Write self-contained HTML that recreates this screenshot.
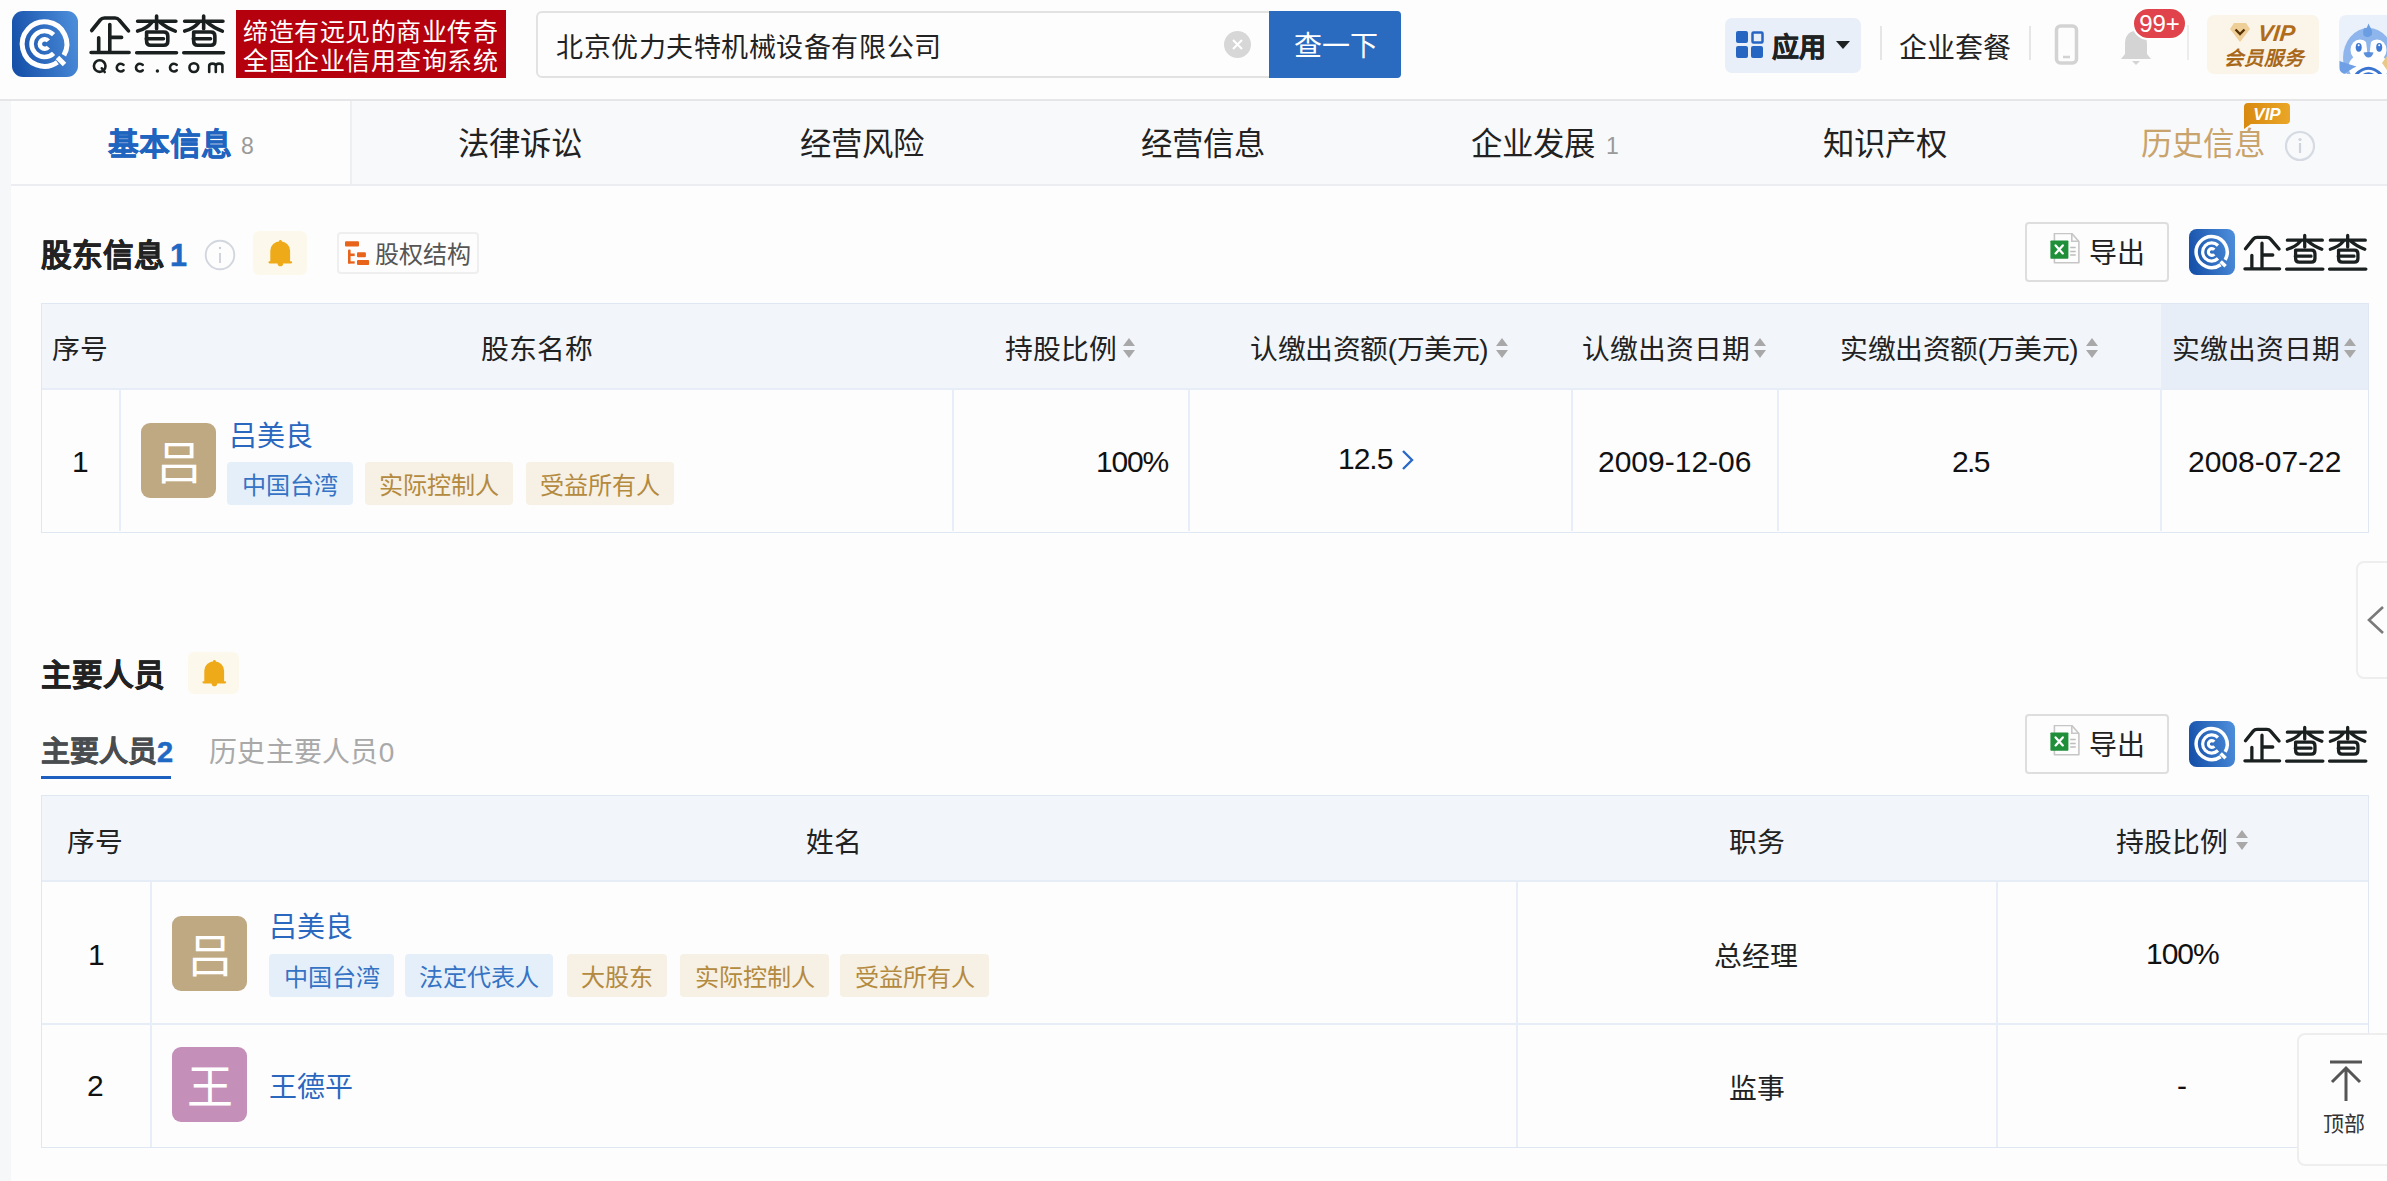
<!DOCTYPE html>
<html lang="zh-CN">
<head>
<meta charset="utf-8">
<style>
*{margin:0;padding:0;box-sizing:border-box}
html,body{width:2387px;height:1181px;overflow:hidden;background:#fdfdfd}
body{position:relative;font-family:"Liberation Sans",sans-serif;color:#222}
.a{position:absolute;white-space:nowrap}
.hdr{position:absolute;left:0;top:0;width:2387px;height:101px;background:#fdfdfd;border-bottom:2px solid #e6e6e8}
.strip{position:absolute;left:0;top:101px;width:11px;height:1080px;background:#f6f7f9}
.tabs{position:absolute;left:11px;top:101px;width:2376px;height:85px;background:#f8f9fb;border-bottom:2px solid #ecedf0}
.tab1{position:absolute;left:11px;top:101px;width:341px;height:83px;background:#fdfdfd;border-right:2px solid #eeeff2}
.tt{font-size:31.4px;line-height:40px;top:125px;color:#222}
.cnt{font-size:23px;line-height:30px;color:#9a9a9a}
.sec{font-size:30.6px;line-height:40px;font-weight:bold;color:#222;-webkit-text-stroke:0.5px currentColor}
.tbl{position:absolute;border:1px solid #dfe7f3;background:#fdfdfe}
.th{position:absolute;background:#f2f6fb}
.vl{position:absolute;width:2px;background:#e8eef7}
.hl{position:absolute;height:2px;background:#e6edf6}
.cell{font-size:27.8px;line-height:36px;color:#222}
.num{font-size:30px;line-height:36px;color:#111}
.tag{position:absolute;height:43px;border-radius:4px;font-size:24.1px;line-height:47px;text-align:center}
.tb{background:#e5effa;color:#3573c4}
.tg{background:#f6f0e5;color:#b48a3e}
.av{position:absolute;width:75px;height:75px;border-radius:9px;color:#fff;font-size:46px;line-height:81px;text-align:center}
.name{font-size:28px;line-height:36px;color:#2a68c0}
.sort{position:absolute;width:12px;height:20px}
</style>
</head>
<body>
<svg width="0" height="0" style="position:absolute">
<defs>
<linearGradient id="lg" x1="0" y1="0.6" x2="1" y2="0.4">
<stop offset="0" stop-color="#1550a9"/><stop offset="1" stop-color="#4b8cd9"/>
</linearGradient>
<symbol id="qicon" viewBox="0 0 66 66">
<rect width="66" height="66" rx="11" fill="url(#lg)"/>
<g fill="none" stroke="#fff">
<path d="M45.4 51.3 A22.3 22.3 0 1 1 51.9 44.15" stroke-width="5"/>
<path d="M45.5 46.5 L52.5 53.5" stroke-width="5"/>
<path d="M41.6 23.65 A13 13 0 1 0 41.6 42.35" stroke-width="4.6"/>
<path d="M36.28 29.9 A4.8 4.8 0 1 0 36.28 36.1" stroke-width="4.5"/>
</g>
</symbol>
<symbol id="qtext" viewBox="0 0 144 46">
<g fill="none" stroke="#1a1f1f" stroke-width="3.6" stroke-linecap="round" stroke-linejoin="round">
<path d="M5.7 20.5 L14.2 10 Q15.8 8 18.5 8 L29 8 Q31.6 8 33.2 10 L42.5 20.8"/>
<path d="M23.8 14.5 V41.6 M25.3 27.4 H35.6 M12.7 27.7 V41.6 M5.1 42.5 H43.1"/>
<g id="cha">
<path d="M51.6 11.2 H89.9 M70.6 6 V18.7 M65.8 12.4 Q61 18.5 51.6 21.1 M74.2 12.4 Q80 17.5 89.3 21.1 M60.3 28.7 H77.5 M50.7 42.8 H90.5"/>
<path d="M60.6 22 H77.8 Q81.8 22 81.8 26 V31.3 Q81.8 35.3 77.8 35.3 H64.6 Q60.6 35.3 60.6 31.3 Z"/>
</g>
<use href="#cha" x="47.06"/>
</g>
</symbol>
</defs>
</svg>

<!-- HEADER -->
<div class="hdr"></div>
<svg class="a" style="left:11.66px;top:11px" width="66" height="66"><use href="#qicon"/></svg>
<svg class="a" style="left:86px;top:10px" width="144" height="46" viewBox="0 0 144 46"><use href="#qtext"/></svg>
<svg class="a" style="left:86px;top:56px" width="144" height="22" viewBox="0 46 144 22">
<g fill="none" stroke="#1a1f1f" stroke-width="2.6" stroke-linecap="round">
<circle cx="13.7" cy="56.1" r="5.8"/><path d="M15.8 58.3 L18.7 62"/>
<path d="M37.5 54.9 A3.9 3.9 0 1 0 37.5 60.3"/>
<path d="M56.7 54.9 A3.9 3.9 0 1 0 56.7 60.3"/>
<path d="M90.7 54.9 A3.9 3.9 0 1 0 90.7 60.3"/>
<circle cx="107.85" cy="57.6" r="4.4"/>
<path d="M123.2 62 V56 Q123.2 53.6 126.5 53.6 Q129.8 53.6 129.8 56 V62 M129.8 56 Q129.8 53.6 133.1 53.6 Q136.4 53.6 136.4 56 V62"/>
</g>
<circle cx="71.4" cy="61" r="1.7" fill="#1a1f1f"/>
</svg>
<div class="a" style="left:236px;top:10px;width:270px;height:68px;background:#b5000e"></div>
<div class="a" style="left:243px;top:18px;font-size:25px;line-height:29px;letter-spacing:0.55px;color:#fff">缔造有远见的商业传奇<br>全国企业信用查询系统</div>

<!-- search -->
<div class="a" style="left:536px;top:11px;width:740px;height:67px;border:2px solid #e2e2e2;border-radius:6px;background:#fdfdfd"></div>
<div class="a" style="left:556px;top:30px;font-size:27px;letter-spacing:0.55px;line-height:36px;color:#222">北京优力夫特机械设备有限公司</div>
<div class="a" style="left:1224px;top:31px;width:27px;height:27px;border-radius:50%;background:#d7d7d7"></div>
<svg class="a" style="left:1224px;top:31px" width="27" height="27"><path d="M9 9 L18 18 M18 9 L9 18" stroke="#fff" stroke-width="2"/></svg>
<div class="a" style="left:1269px;top:11px;width:132px;height:67px;background:#2a6bbf;border-radius:0 4px 4px 0"></div>
<div class="a" style="left:1294px;top:29px;font-size:28px;line-height:36px;color:#fff">查一下</div>

<!-- apps -->
<div class="a" style="left:1725px;top:18px;width:136px;height:55px;background:#e8eff9;border-radius:7px"></div>
<svg class="a" style="left:1736px;top:31px" width="28" height="28">
<rect x="0" y="0" width="12" height="12" rx="2" fill="#2666c2"/>
<rect x="16.5" y="1.5" width="10" height="10" rx="1" fill="none" stroke="#2666c2" stroke-width="2.5"/>
<rect x="0" y="15" width="12" height="12" rx="2" fill="#2666c2"/>
<rect x="15" y="15" width="12" height="12" rx="2" fill="#2666c2"/>
</svg>
<div class="a" style="left:1772px;top:30px;font-size:27px;line-height:36px;font-weight:bold;color:#1e2222;-webkit-text-stroke:0.5px currentColor">应用</div>
<svg class="a" style="left:1836px;top:41px" width="15" height="9"><path d="M0 0 H14 L7 8 Z" fill="#1e2222"/></svg>
<div class="a" style="left:1880px;top:26px;width:2px;height:34px;background:#e6e6e6"></div>
<div class="a" style="left:1899px;top:31px;font-size:28px;line-height:36px;color:#222">企业套餐</div>
<div class="a" style="left:2029px;top:26px;width:2px;height:34px;background:#e6e6e6"></div>
<svg class="a" style="left:2054px;top:24px" width="26" height="42">
<rect x="2.5" y="2" width="20" height="37" rx="4" fill="none" stroke="#d3d3d3" stroke-width="3.5"/>
<path d="M9 33 H16" stroke="#d3d3d3" stroke-width="2.5"/>
</svg>
<svg class="a" style="left:2118px;top:28px" width="36" height="38">
<path d="M18 3 C10 3 7 9 7 16 V26 L3 31 H33 L29 26 V16 C29 9 26 3 18 3 Z" fill="#d4d4d4"/>
<path d="M14 33 H22 L18 37 Z" fill="#d4d4d4"/>
</svg>
<div class="a" style="left:2132px;top:7px;width:55px;height:33px;border-radius:17px;background:#e0434c;border:2px solid #fff;color:#fff;font-size:24px;line-height:29px;text-align:center">99+</div>
<div class="a" style="left:2187px;top:25px;width:2px;height:35px;background:#ececec"></div>
<div class="a" style="left:2207px;top:15px;width:112px;height:59px;background:#fbf4e8;border-radius:7px"></div>
<svg class="a" style="left:2229px;top:22px" width="22" height="21">
<path d="M5 1 H17 L21 7 L11 20 L1 7 Z" fill="#efcf98"/>
<path d="M6.5 7.5 L11 12 L15.5 7.5" fill="none" stroke="#5a3408" stroke-width="2.4"/>
</svg>
<div class="a" style="left:2258px;top:20px;font-size:23px;line-height:26px;font-weight:bold;font-style:italic;color:#b06c18;transform:skewX(-6deg)">VIP</div>
<div class="a" style="left:2224px;top:45px;font-size:19.5px;line-height:26px;font-weight:bold;font-style:italic;color:#a8681a">会员服务</div>
<div class="a" style="left:2339px;top:15px;width:60px;height:59px;background:#eaf1fb;border-radius:7px;overflow:hidden">
<svg width="60" height="59">
<ellipse cx="29.5" cy="43" rx="25.5" ry="30" fill="#8fb6ec"/>
<ellipse cx="21" cy="35" rx="9.5" ry="10.5" fill="#fff"/>
<ellipse cx="38" cy="35" rx="9.5" ry="10.5" fill="#fff"/>
<ellipse cx="29.5" cy="52" rx="20" ry="15" fill="#fff"/>
<path d="M26.5 22 L32.5 22 L30.5 39 L28.5 39 Z" fill="#8fb6ec"/>
<path d="M24.5 20 C23.5 16 24.5 14 26 12.5 C27 14.5 28 13 29.5 8.6 C31 12.5 34 15 33 19 C32.5 22.5 25.5 23 24.5 20 Z" fill="#6b9de3"/>
<path d="M0.5 46 Q9 49 17.5 51.5 Q10 55 6 59 H0.5 Z" fill="#6f9fe4"/>
<ellipse cx="19.7" cy="32.3" rx="3" ry="4.4" fill="#3f7ad4"/>
<ellipse cx="40.2" cy="32.3" rx="3" ry="4.4" fill="#3f7ad4"/>
<circle cx="19.7" cy="30.3" r="1" fill="#fff"/><circle cx="40.2" cy="30.3" r="1" fill="#fff"/>
<path d="M24.5 37.5 Q29.5 36.5 34.5 37.5 Q33 42.5 29.5 42.5 Q26 42.5 24.5 37.5 Z" fill="#5a8edc"/>
<path d="M17 59.5 Q29.5 47 42 59.5" fill="none" stroke="#3a74d0" stroke-width="3"/>
<path d="M23 59.5 Q29.5 55 36 59.5 Z" fill="#3a74d0"/>
<path d="M48 41 L54 48 L48 55 L43 48 Z" fill="#e8c98a"/>
</svg>
</div>

<!-- TABS -->
<div class="strip"></div>
<div class="tabs"></div>
<div class="tab1"></div>
<div class="a tt" style="left:108px;color:#1f65c0;font-weight:bold;font-size:30.8px;-webkit-text-stroke:0.5px currentColor">基本信息</div>
<div class="a cnt" style="left:241px;top:131px">8</div>
<div class="a tt" style="left:458px">法律诉讼</div>
<div class="a tt" style="left:800px">经营风险</div>
<div class="a tt" style="left:1141px">经营信息</div>
<div class="a tt" style="left:1471px">企业发展</div>
<div class="a cnt" style="left:1606px;top:131px">1</div>
<div class="a tt" style="left:1823px">知识产权</div>
<div class="a tt" style="left:2141px;color:#c9a36c">历史信息</div>
<svg class="a" style="left:2284px;top:130px" width="32" height="32"><circle cx="16" cy="16" r="14" fill="none" stroke="#d6dae2" stroke-width="2.2"/><circle cx="16" cy="9.5" r="1.6" fill="#cfd4dc"/><path d="M16 13 V23" stroke="#cfd4dc" stroke-width="2.2"/></svg>
<svg class="a" style="left:2243px;top:103px" width="48" height="27">
<defs><linearGradient id="vg" x1="0" y1="0" x2="1" y2="0"><stop offset="0" stop-color="#d88a10"/><stop offset="1" stop-color="#eaa628"/></linearGradient></defs>
<path d="M5 0 H43 Q47 0 47 4 V17 Q47 21 43 21 H8 L1 26 V4 Q1 0 5 0 Z" fill="url(#vg)"/>
<text x="24" y="17" font-family="Liberation Sans" font-weight="bold" font-style="italic" font-size="17" fill="#fff" text-anchor="middle">VIP</text>
</svg>


<!-- SECTION 1 -->
<div class="a sec" style="left:41px;top:235px">股东信息</div>
<div class="a sec" style="left:170px;top:235px;color:#1f68c4">1</div>
<svg class="a" style="left:204px;top:239px" width="32" height="32"><circle cx="16" cy="16" r="14.3" fill="none" stroke="#d2d6de" stroke-width="1.9"/><circle cx="16" cy="9" r="1.2" fill="#c9cdd6"/><path d="M16 14 V24" stroke="#c9cdd6" stroke-width="1.7"/></svg>
<div class="a" style="left:253px;top:231px;width:54px;height:44px;border-radius:6px;background:#fcf9ec"></div>
<svg class="a" style="left:266px;top:239px" width="28" height="28" viewBox="0 0 28 28"><g fill="#eeaa18"><circle cx="14.4" cy="2.3" r="1.4"/><path d="M4.3 22.2 V11.8 A9.9 9.6 0 0 1 24.1 11.8 V22.2 H25 Q26.2 22.2 26.2 23.35 Q26.2 24.5 25 24.5 H3.6 Q2.4 24.5 2.4 23.35 Q2.4 22.2 3.6 22.2 Z M11.6 24.4 A2.8 2.8 0 0 0 17.2 24.4 Z"/></g></svg>
<div class="a" style="left:337px;top:232px;width:142px;height:42px;border:2px solid #efefef;border-radius:4px;background:#fdfdfd"></div>
<svg class="a" style="left:345px;top:241px" width="26" height="25" fill="#e8641a"><rect x="0" y="0.3" width="14" height="5.3" rx="1"/><rect x="3" y="8.5" width="2.6" height="14.1" rx="1"/><rect x="3" y="20.3" width="6.7" height="2.3"/><rect x="3" y="12.5" width="6.7" height="2.6"/><rect x="12" y="11.3" width="8.9" height="4.9" rx="1"/><rect x="12" y="19" width="12.1" height="4.9" rx="1"/></svg>
<div class="a" style="left:375px;top:239px;font-size:24px;line-height:32px;color:#555">股权结构</div>

<div class="a" style="left:2025px;top:222px;width:144px;height:60px;border:2px solid #dedede;border-radius:4px;background:#fdfdfd"></div>
<svg class="a" style="left:2050px;top:233px" width="32" height="32" viewBox="0 0 32 32"><path d="M4.4 0.5 H21.8 L28.9 8.5 V29.8 H4.4 Z" fill="#fdfdfd" stroke="#c6c6c6" stroke-width="1.6" stroke-linejoin="round"/><path d="M21.8 0.5 V8.2 H28.9" fill="none" stroke="#c6c6c6" stroke-width="1.6"/><path d="M20.2 14.5 H25.7 M20.2 18.4 H25.7 M20.2 22.1 H25.7" stroke="#bdbdbd" stroke-width="1.5"/><rect x="0.4" y="7.5" width="18" height="18.3" rx="0.8" fill="#1f8f3a"/><path d="M5.6 12.4 L12.8 20.4 M12.8 12.4 L5.6 20.4" stroke="#fff" stroke-width="2.3" stroke-linecap="round"/></svg>
<div class="a" style="left:2089px;top:236px;font-size:28px;line-height:36px;color:#222">导出</div>
<svg class="a" style="left:2189px;top:229px" width="46" height="46"><use href="#qicon"/></svg>
<svg class="a" style="left:2239.5px;top:230px" width="132" height="42" viewBox="0 0 144 46"><use href="#qtext"/></svg>

<!-- TABLE 1 -->
<div class="tbl" style="left:41px;top:303px;width:2328px;height:230px"></div>
<div class="th" style="left:42px;top:304px;width:2326px;height:85px"></div>
<div class="th" style="left:2161px;top:304px;width:207px;height:85px;background:#e8eef7"></div>
<div class="hl" style="left:42px;top:388px;width:2326px"></div>
<div class="vl" style="left:119px;top:389px;height:142px"></div>
<div class="vl" style="left:952px;top:389px;height:142px"></div>
<div class="vl" style="left:1188px;top:389px;height:142px"></div>
<div class="vl" style="left:1571px;top:389px;height:142px"></div>
<div class="vl" style="left:1777px;top:389px;height:142px"></div>
<div class="vl" style="left:2160px;top:389px;height:142px"></div>

<div class="a cell" style="left:52px;top:332px">序号</div>
<div class="a cell" style="left:481px;top:332px">股东名称</div>
<div class="a cell" style="left:1005px;top:332px">持股比例</div>
<svg class="a sort" style="left:1123px;top:338px" viewBox="0 0 12 20"><path d="M6 0 L12 8 H0 Z M0 12 H12 L6 20 Z" fill="#a8a8a8"/></svg>
<div class="a cell" style="left:1250px;top:332px;letter-spacing:-0.45px">认缴出资额(万美元)</div>
<svg class="a sort" style="left:1496px;top:338px" viewBox="0 0 12 20"><path d="M6 0 L12 8 H0 Z M0 12 H12 L6 20 Z" fill="#a8a8a8"/></svg>
<div class="a cell" style="left:1582px;top:332px">认缴出资日期</div>
<svg class="a sort" style="left:1754px;top:338px" viewBox="0 0 12 20"><path d="M6 0 L12 8 H0 Z M0 12 H12 L6 20 Z" fill="#a8a8a8"/></svg>
<div class="a cell" style="left:1840px;top:332px;letter-spacing:-0.45px">实缴出资额(万美元)</div>
<svg class="a sort" style="left:2086px;top:338px" viewBox="0 0 12 20"><path d="M6 0 L12 8 H0 Z M0 12 H12 L6 20 Z" fill="#a8a8a8"/></svg>
<div class="a cell" style="left:2172px;top:332px">实缴出资日期</div>
<svg class="a sort" style="left:2344px;top:338px" viewBox="0 0 12 20"><path d="M6 0 L12 8 H0 Z M0 12 H12 L6 20 Z" fill="#a8a8a8"/></svg>

<div class="a num" style="left:72px;top:444px">1</div>
<div class="av" style="left:141px;top:423px;background:#bfa983">吕</div>
<div class="a name" style="left:229px;top:419px">吕美良</div>
<div class="tag tb" style="left:227px;top:462px;width:126px">中国台湾</div>
<div class="tag tg" style="left:365px;top:462px;width:148px">实际控制人</div>
<div class="tag tg" style="left:526px;top:462px;width:148px">受益所有人</div>
<div class="a num" style="left:1096px;top:444px;letter-spacing:-1.2px">100%</div>
<div class="a num" style="left:1338px;top:441px;letter-spacing:-1px">12.5</div>
<svg class="a" style="left:1400px;top:449px" width="15" height="22"><path d="M3 2 L12 11 L3 20" fill="none" stroke="#2a6ac6" stroke-width="2.4"/></svg>
<div class="a num" style="left:1598px;top:444px">2009-12-06</div>
<div class="a num" style="left:1952px;top:444px;letter-spacing:-1.6px">2.5</div>
<div class="a num" style="left:2188px;top:444px">2008-07-22</div>

<!-- SECTION 2 -->
<div class="a sec" style="left:41px;top:655px">主要人员</div>
<div class="a" style="left:188px;top:652px;width:51px;height:42px;border-radius:6px;background:#fcf9ec"></div>
<svg class="a" style="left:200px;top:659px" width="28" height="28" viewBox="0 0 28 28"><g fill="#eeaa18"><circle cx="14.4" cy="2.3" r="1.4"/><path d="M4.3 22.2 V11.8 A9.9 9.6 0 0 1 24.1 11.8 V22.2 H25 Q26.2 22.2 26.2 23.35 Q26.2 24.5 25 24.5 H3.6 Q2.4 24.5 2.4 23.35 Q2.4 22.2 3.6 22.2 Z M11.6 24.4 A2.8 2.8 0 0 0 17.2 24.4 Z"/></g></svg>
<div class="a" style="left:41px;top:734px;font-size:29px;line-height:36px;font-weight:bold;color:#4a4d4f;-webkit-text-stroke:0.5px currentColor">主要人员<span style="color:#1f68c4">2</span></div>
<div class="a" style="left:209px;top:735px;font-size:28px;letter-spacing:0.3px;line-height:36px;color:#a9a9a9">历史主要人员0</div>
<div class="a" style="left:41px;top:776px;width:130px;height:3px;background:#1d5fbf"></div>

<div class="a" style="left:2025px;top:714px;width:144px;height:60px;border:2px solid #dedede;border-radius:4px;background:#fdfdfd"></div>
<svg class="a" style="left:2050px;top:725px" width="32" height="32" viewBox="0 0 32 32"><path d="M4.4 0.5 H21.8 L28.9 8.5 V29.8 H4.4 Z" fill="#fdfdfd" stroke="#c6c6c6" stroke-width="1.6" stroke-linejoin="round"/><path d="M21.8 0.5 V8.2 H28.9" fill="none" stroke="#c6c6c6" stroke-width="1.6"/><path d="M20.2 14.5 H25.7 M20.2 18.4 H25.7 M20.2 22.1 H25.7" stroke="#bdbdbd" stroke-width="1.5"/><rect x="0.4" y="7.5" width="18" height="18.3" rx="0.8" fill="#1f8f3a"/><path d="M5.6 12.4 L12.8 20.4 M12.8 12.4 L5.6 20.4" stroke="#fff" stroke-width="2.3" stroke-linecap="round"/></svg>
<div class="a" style="left:2089px;top:728px;font-size:28px;line-height:36px;color:#222">导出</div>
<svg class="a" style="left:2189px;top:721px" width="46" height="46"><use href="#qicon"/></svg>
<svg class="a" style="left:2239.5px;top:722px" width="132" height="42" viewBox="0 0 144 46"><use href="#qtext"/></svg>

<!-- TABLE 2 -->
<div class="tbl" style="left:41px;top:795px;width:2328px;height:353px"></div>
<div class="th" style="left:42px;top:796px;width:2326px;height:85px"></div>
<div class="hl" style="left:42px;top:880px;width:2326px"></div>
<div class="hl" style="left:42px;top:1023px;width:2326px"></div>
<div class="vl" style="left:150px;top:881px;height:266px"></div>
<div class="vl" style="left:1516px;top:881px;height:266px"></div>
<div class="vl" style="left:1996px;top:881px;height:266px"></div>

<div class="a cell" style="left:67px;top:825px">序号</div>
<div class="a cell" style="left:806px;top:825px">姓名</div>
<div class="a cell" style="left:1729px;top:825px">职务</div>
<div class="a cell" style="left:2116px;top:825px">持股比例</div>
<svg class="a sort" style="left:2236px;top:830px" viewBox="0 0 12 20"><path d="M6 0 L12 8 H0 Z M0 12 H12 L6 20 Z" fill="#a8a8a8"/></svg>

<div class="a num" style="left:88px;top:937px">1</div>
<div class="av" style="left:172px;top:916px;background:#bfa983">吕</div>
<div class="a name" style="left:269px;top:910px">吕美良</div>
<div class="tag tb" style="left:269px;top:954px;width:125px">中国台湾</div>
<div class="tag tb" style="left:405px;top:954px;width:148px">法定代表人</div>
<div class="tag tg" style="left:567px;top:954px;width:100px">大股东</div>
<div class="tag tg" style="left:680px;top:954px;width:149px">实际控制人</div>
<div class="tag tg" style="left:840px;top:954px;width:149px">受益所有人</div>
<div class="a cell" style="left:1714px;top:939px">总经理</div>
<div class="a num" style="left:2146px;top:936px;letter-spacing:-1px">100%</div>

<div class="a num" style="left:87px;top:1068px">2</div>
<div class="av" style="left:172px;top:1047px;background:#c490b9">王</div>
<div class="a name" style="left:269px;top:1070px">王德平</div>
<div class="a cell" style="left:1729px;top:1071px">监事</div>
<div class="a num" style="left:2177px;top:1068px">-</div>

<!-- floating -->
<div class="a" style="left:2356px;top:561px;width:50px;height:118px;border:2px solid #eeeeee;border-radius:8px;background:#fdfdfd"></div>
<svg class="a" style="left:2365px;top:604px" width="22" height="32"><path d="M18 3 L4 16 L18 29" fill="none" stroke="#7a7a7a" stroke-width="2.6"/></svg>
<div class="a" style="left:2297px;top:1033px;width:110px;height:133px;border:2px solid #eeeeee;border-radius:8px;background:#fdfdfd"></div>
<svg class="a" style="left:2328px;top:1060px" width="36" height="42"><path d="M2 2 H34 M18 8 V41 M4 22 L18 8 L32 22" fill="none" stroke="#555" stroke-width="3"/></svg>
<div class="a" style="left:2323px;top:1109px;font-size:21px;line-height:30px;color:#333">顶部</div>

</body>
</html>
